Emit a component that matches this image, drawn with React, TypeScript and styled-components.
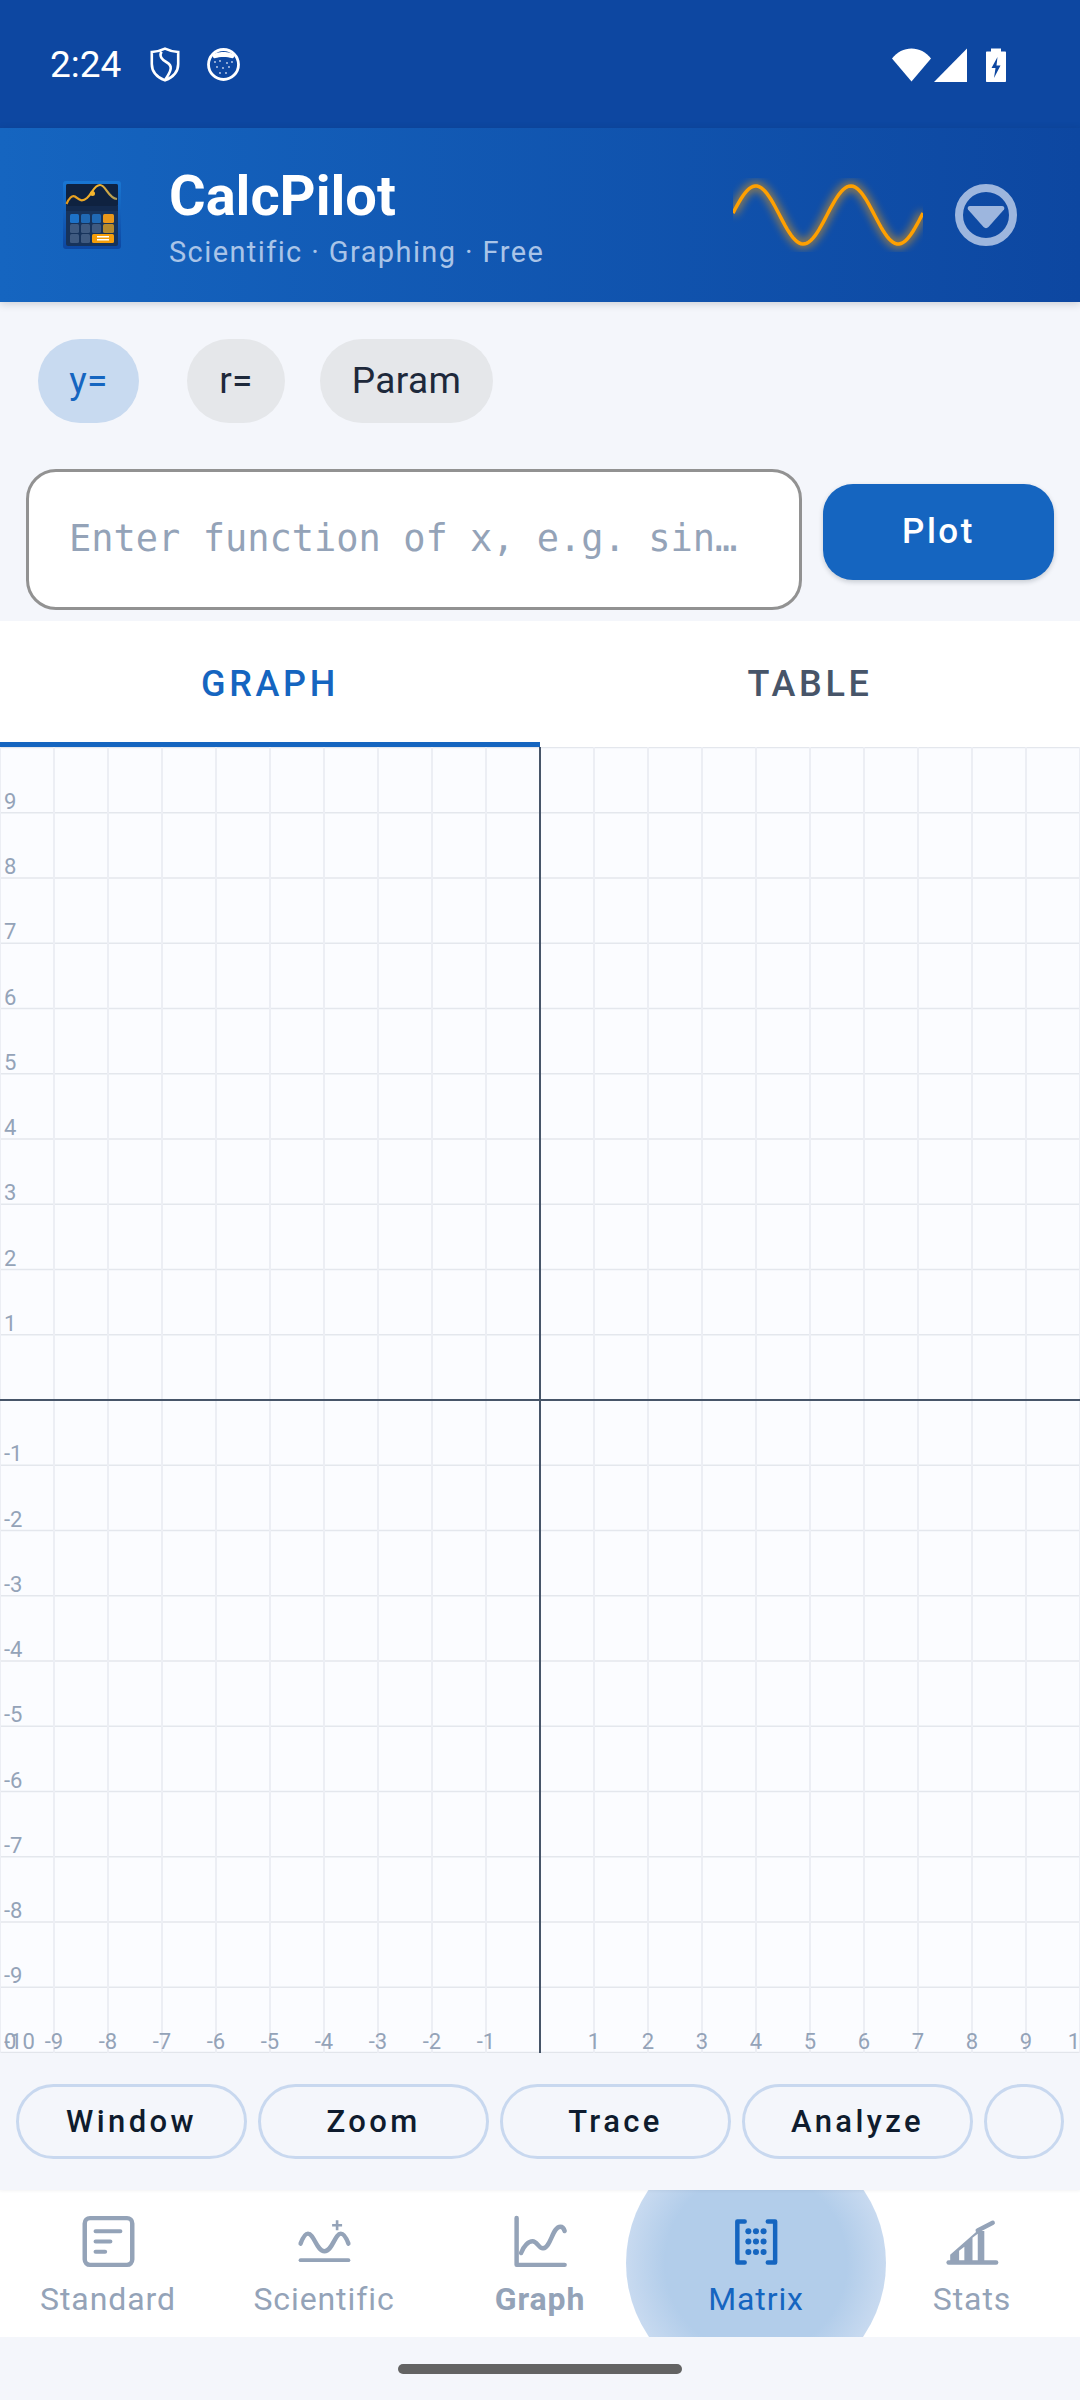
import React from "react";
import styled, { createGlobalStyle } from "styled-components";

const GlobalStyle = createGlobalStyle`
  html, body {
    margin: 0;
    padding: 0;
    background: #f4f6fb;
  }
  * {
    box-sizing: border-box;
  }
`;

const modes = [
  { label: "y=", width: 101, active: true },
  { label: "r=", width: 98, active: false },
  { label: "Param", width: 173, active: false },
];

const tools = ["Window", "Zoom", "Trace", "Analyze"];

const GRID_W = 1080;
const GRID_H = 1306;
const CELL_X = 54;
const CELL_Y = 65.25;

const range = (from: number, to: number) => {
  const out: number[] = [];
  for (let i = from; i <= to; i++) out.push(i);
  return out;
};

const sinePath = () => {
  const pts: string[] = [];
  for (let x = 0; x <= 190; x += 2) {
    const y = 37 - 29 * Math.sin(((x + 1) / 95) * Math.PI * 2);
    pts.push(`${x === 0 ? "M" : "L"}${x} ${y.toFixed(2)}`);
  }
  return pts.join(" ");
};

const ShieldIcon = () => (
  <svg width="30" height="35" viewBox="0 0 30 35" fill="none" stroke="#fff" strokeWidth="2.6">
    <path d="M15 1.6C11 3.6 6.5 4.6 1.8 5V17C1.8 25 7.5 30.5 15 33.4C22.5 30.5 28.2 25 28.2 17V5C23.5 4.6 19 3.6 15 1.6Z" />
    <path d="M11.5 4.5C9 9 11.5 12.5 17 15.5C22.5 18.5 22 23 15 33" />
  </svg>
);

const BubbleIcon = () => (
  <svg width="33" height="33" viewBox="0 0 33 33">
    <circle cx="16.5" cy="16.5" r="15" fill="none" stroke="#fff" strokeWidth="2.8" />
    <path d="M6 7C9 3 24 3 27 7C27.5 9.5 26 11 24.5 10C21 8.5 12 8.5 8.5 10C7 11 5.5 9.5 6 7Z" fill="#fff" />
    {[
      [8, 14],
      [13, 13],
      [20, 15],
      [25, 14],
      [10, 19],
      [16, 20],
      [22, 19],
      [13, 25],
      [19, 25],
    ].map(([cx, cy]) => (
      <circle key={`${cx}-${cy}`} cx={cx} cy={cy} r="0.9" fill="#c8d6ee" />
    ))}
  </svg>
);

const WifiIcon = () => (
  <svg width="39" height="34" viewBox="0 0 39 34">
    <path d="M0 10.5C5 4 12 0.5 19.5 0.5C27 0.5 34 4 39 10.5L19.5 33.5Z" fill="#fff" />
  </svg>
);

const SignalIcon = () => (
  <svg width="33" height="34" viewBox="0 0 33 34">
    <path d="M33 0.5V34H0Z" fill="#fff" />
  </svg>
);

const BatteryIcon = () => (
  <svg width="20" height="34" viewBox="0 0 20 34">
    <path
      d="M5 0.5H15V3.5H19C19.6 3.5 20 3.9 20 4.5V33C20 33.6 19.6 34 19 34H1C0.4 34 0 33.6 0 33V4.5C0 3.9 0.4 3.5 1 3.5H5Z"
      fill="#fff"
    />
    <path d="M11.5 9L5.5 20H9.5L8 30L14.5 17.5H10.5Z" fill="#0d47a1" />
  </svg>
);

const LogoIcon = () => (
  <svg width="58" height="68" viewBox="0 0 58 68">
    <defs>
      <linearGradient id="logoEdge" x1="0" y1="0" x2="0" y2="1">
        <stop offset="0" stopColor="#1976d2" />
        <stop offset="1" stopColor="#0d47a1" />
      </linearGradient>
      <linearGradient id="logoCurve" x1="0" y1="0" x2="1" y2="0">
        <stop offset="0" stopColor="#e39a1c" />
        <stop offset="0.6" stopColor="#f5b52e" />
        <stop offset="1" stopColor="#a99a5c" />
      </linearGradient>
    </defs>
    <rect width="58" height="68" rx="3" fill="url(#logoEdge)" />
    <rect x="3" y="3" width="52" height="62" rx="2" fill="#17335b" />
    <rect x="3" y="3" width="52" height="22" rx="2" fill="#0f2240" />
    <rect x="3" y="25" width="52" height="5" fill="#132a4e" />
    <path d="M3.5 23C6 17 9 14 12 15.5C15 17.5 18 22 24 17C29 13 31 4 37 4C43 4 45 17 54 18" fill="none" stroke="url(#logoCurve)" strokeWidth="2.2" />
    <circle cx="29.5" cy="12.5" r="2.5" fill="#f5b52e" />
    <rect x="7" y="33" width="9" height="9" rx="1.5" fill="#1d72c8" />
    <rect x="18" y="33" width="9" height="9" rx="1.5" fill="#2069b4" />
    <rect x="29" y="33" width="9" height="9" rx="1.5" fill="#2069b4" />
    <rect x="40" y="33" width="11" height="9" rx="1.5" fill="#e8971a" />
    <rect x="7" y="43" width="9" height="9" rx="1.5" fill="#3f5a80" />
    <rect x="18" y="43" width="9" height="9" rx="1.5" fill="#3f5a80" />
    <rect x="29" y="43" width="9" height="9" rx="1.5" fill="#3f5a80" />
    <rect x="40" y="43" width="11" height="9" rx="1.5" fill="#b58a2f" />
    <rect x="7" y="53" width="9" height="9" rx="1.5" fill="#3f5a80" />
    <rect x="18" y="53" width="9" height="9" rx="1.5" fill="#3f5a80" />
    <rect x="29" y="53" width="22" height="9" rx="1.5" fill="#f59e0b" />
    <rect x="34" y="55" width="12" height="1.5" fill="#fff" />
    <rect x="34" y="58" width="12" height="1.5" fill="#fff" />
  </svg>
);

const WaveIcon = () => (
  <svg width="190" height="74" viewBox="0 0 190 74">
    <defs>
      <filter id="waveGlow" x="-10%" y="-30%" width="120%" height="160%">
        <feGaussianBlur stdDeviation="4" />
      </filter>
    </defs>
    <path d={sinePath()} fill="none" stroke="#ffa000" strokeWidth="8" opacity="0.6" filter="url(#waveGlow)" />
    <path d={sinePath()} fill="none" stroke="#ffa000" strokeWidth="3.5" />
  </svg>
);

const DropdownIcon = () => (
  <svg width="62" height="62" viewBox="0 0 62 62">
    <circle cx="31" cy="31" r="27" fill="none" stroke="#9db6de" strokeWidth="8" />
    <path d="M15 22H47C49 22 50 24 49 25.5L33.5 43C32 44.5 30 44.5 28.5 43L13 25.5C12 24 13 22 15 22Z" fill="#9db6de" />
  </svg>
);

const GraphGrid = () => (
  <svg width={GRID_W} height={GRID_H} viewBox={`0 0 ${GRID_W} ${GRID_H}`}>
    {range(0, 20).map((i) => (
      <line key={`h${i}`} x1="0" x2={GRID_W} y1={i * CELL_Y + 0.5} y2={i * CELL_Y + 0.5} stroke="#e4e7ed" strokeWidth="1.5" />
    ))}
    {range(0, 20).map((i) => (
      <line key={`v${i}`} x1={i * CELL_X} x2={i * CELL_X} y1="0" y2={GRID_H} stroke="#eceef4" strokeWidth="2" />
    ))}
    <line x1="0" x2={GRID_W} y1="653" y2="653" stroke="#475569" strokeWidth="2" />
    <line x1="540" x2="540" y1="0" y2={GRID_H} stroke="#475569" strokeWidth="2" />
    <g fontFamily="Roboto, sans-serif" fontSize="22" fill="#94a3b8">
      {range(-9, 9)
        .filter((n) => n !== 0)
        .map((n) => (
          <text key={`y${n}`} x="4" y={653 - n * CELL_Y - 4}>
            {n}
          </text>
        ))}
      <text x="4" y="1302">0</text>
      <text x="4" y="1302">-10</text>
      {range(-9, 10)
        .filter((n) => n !== 0)
        .map((n) => (
          <text key={`x${n}`} x={540 + n * CELL_X} y="1302" textAnchor="middle">
            {n}
          </text>
        ))}
    </g>
  </svg>
);

const StandardIcon = () => (
  <NavSvg>
    <rect x="2.95" y="3.1" width="18.1" height="17.8" rx="2" fill="none" stroke="currentColor" strokeWidth="1.7" />
    <path d="M7.1 8.1H16.5M7.1 12H12.7M7.1 15.9H10.7" fill="none" stroke="currentColor" strokeWidth="1.6" strokeLinecap="round" />
  </NavSvg>
);

const ScientificIcon = () => (
  <NavSvg>
    <path d="M2.9 12.8C3.7 10.6 4.6 9 5.7 9C8 9 9 15.7 12 15.7C15 15.7 16 9 18.2 9C19.4 9 20.3 10.6 21.1 12.8" fill="none" stroke="currentColor" strokeWidth="1.7" strokeLinecap="round" />
    <path d="M2.9 19.1H21.1" fill="none" stroke="currentColor" strokeWidth="1.5" strokeLinecap="round" />
    <path d="M16.8 3.9V7.7M14.9 5.8H18.7" fill="none" stroke="currentColor" strokeWidth="1" />
  </NavSvg>
);

const GraphIcon = () => (
  <NavSvg>
    <path d="M2.9 3V20.9H21.2" fill="none" stroke="currentColor" strokeWidth="1.7" strokeLinecap="round" strokeLinejoin="round" />
    <path d="M4.6 16.4C5.6 13.5 7.5 11.9 9 11.9C10.8 11.9 11.3 14.8 13 14.6C16 14.2 16.5 6.4 19.6 6.4C20.4 6.4 20.9 7 21.2 8" fill="none" stroke="currentColor" strokeWidth="1.7" strokeLinecap="round" />
  </NavSvg>
);

const MatrixIcon = () => (
  <NavSvg>
    <path d="M7.5 4.4H4.7V20H7.5M16.3 4.4H19.1V20H16.3" fill="none" stroke="currentColor" strokeWidth="1.7" strokeLinejoin="round" strokeLinecap="round" />
    {[8.1, 12, 16].map((cy) =>
      [8.9, 11.8, 14.7].map((cx) => <circle key={`${cx}-${cy}`} cx={cx} cy={cy} r="1.15" fill="currentColor" />),
    )}
  </NavSvg>
);

const StatsIcon = () => (
  <NavSvg>
    <path
      fillRule="evenodd"
      d="M3.5 17L13.8 8H16.5V19.5H3.5ZM6.9 15.5V19.5H8.9V14ZM12 10.6V19.5H14V9Z"
      fill="currentColor"
    />
    <path d="M14 7.8L19.7 4.9" fill="none" stroke="currentColor" strokeWidth="1.7" strokeLinecap="round" />
    <path d="M2.9 20H21" fill="none" stroke="currentColor" strokeWidth="1.7" strokeLinecap="round" />
  </NavSvg>
);

const navItems = [
  { label: "Standard", Icon: StandardIcon },
  { label: "Scientific", Icon: ScientificIcon },
  { label: "Graph", Icon: GraphIcon, bold: true },
  { label: "Matrix", Icon: MatrixIcon, active: true },
  { label: "Stats", Icon: StatsIcon },
];

export default function App() {
  return (
    <Page>
      <GlobalStyle />
      <StatusBar>
        <Time>2:24</Time>
        <ShieldIcon />
        <BubbleIcon />
        <StatusRight>
          <WifiIcon />
          <SignalIcon />
          <BatteryIcon />
        </StatusRight>
      </StatusBar>

      <Header>
        <LogoIcon />
        <TitleBlock>
          <Title>CalcPilot</Title>
          <Subtitle>Scientific · Graphing · Free</Subtitle>
        </TitleBlock>
        <HeaderRight>
          <WaveIcon />
          <DropdownIcon />
        </HeaderRight>
      </Header>

      <Controls>
        <ModeRow>
          {modes.map((m) => (
            <ModeChip key={m.label} $width={m.width} $active={m.active}>
              {m.label}
            </ModeChip>
          ))}
        </ModeRow>
        <InputRow>
          <FunctionInput placeholder="Enter function of x, e.g. sin…" readOnly />
          <PlotButton>Plot</PlotButton>
        </InputRow>
      </Controls>

      <Tabs>
        <Tab $active>GRAPH</Tab>
        <Tab>TABLE</Tab>
      </Tabs>

      <GraphArea>
        <GraphGrid />
      </GraphArea>

      <Toolbar>
        {tools.map((t) => (
          <ToolButton key={t}>{t}</ToolButton>
        ))}
        <ToolStub />
      </Toolbar>

      <Nav>
        {navItems.map(({ label, Icon, active, bold }) => (
          <NavItem key={label} $active={active}>
            {active && <NavHighlight />}
            <Icon />
            <NavLabel $bold={bold}>{label}</NavLabel>
          </NavItem>
        ))}
      </Nav>

      <GestureArea>
        <GesturePill />
      </GestureArea>
    </Page>
  );
}

const NavSvg = ({ children }: { children: React.ReactNode }) => (
  <NavIconSvg viewBox="0 0 24 24">{children}</NavIconSvg>
);

const Page = styled.div`
  width: 1080px;
  height: 2400px;
  display: flex;
  flex-direction: column;
  overflow: hidden;
  font-family: Roboto, sans-serif;
  background: #f4f6fb;
`;

const StatusBar = styled.div`
  height: 128px;
  flex: none;
  display: flex;
  align-items: center;
  gap: 27px;
  padding: 1px 74px 0 50px;
  background: #0d47a1;
`;

const Time = styled.div`
  color: #fff;
  font-size: 37px;
  margin-right: 2px;
`;

const StatusRight = styled.div`
  margin-left: auto;
  display: flex;
  align-items: center;
  gap: 3px;

  svg:last-child {
    margin-left: 16px;
  }
`;

const Header = styled.div`
  height: 174px;
  flex: none;
  display: flex;
  align-items: center;
  padding: 0 63px;
  background: linear-gradient(90deg, #1565c0, #0d47a1);
  box-shadow: 0 2px 8px rgba(15, 28, 46, 0.18);
  position: relative;
  z-index: 1;
`;

const TitleBlock = styled.div`
  margin-left: 48px;
  padding-top: 2px;
  display: flex;
  flex-direction: column;
`;

const Title = styled.div`
  color: #fff;
  font-size: 56px;
  font-weight: 700;
  line-height: 64px;
`;

const Subtitle = styled.div`
  color: #a9c4e8;
  font-size: 29px;
  letter-spacing: 1.4px;
  line-height: 34px;
  margin-top: 7px;
`;

const HeaderRight = styled.div`
  margin-left: auto;
  display: flex;
  align-items: center;
  gap: 32px;
`;

const Controls = styled.div`
  height: 319px;
  flex: none;
  padding-top: 37px;
`;

const ModeRow = styled.div`
  display: flex;
  gap: 35px;
  padding-left: 38px;

  > :first-child {
    margin-right: 13px;
  }
`;

const ModeChip = styled.div<{ $width: number; $active?: boolean }>`
  width: ${(p) => p.$width}px;
  height: 84px;
  padding-bottom: 2px;
  border-radius: 42px;
  display: flex;
  align-items: center;
  justify-content: center;
  font-size: 37px;
  letter-spacing: 0.4px;
  color: ${(p) => (p.$active ? "#1565c0" : "#1e293b")};
  background: ${(p) => (p.$active ? "#c8daf0" : "#e5e7ea")};
`;

const InputRow = styled.div`
  margin-top: 46px;
  padding-left: 26px;
  display: flex;
  align-items: center;
  gap: 21px;
`;

const FunctionInput = styled.input`
  width: 776px;
  height: 141px;
  padding: 0 40px 2px;
  border: 3px solid #929292;
  border-radius: 30px;
  background: #fff;
  outline: none;
  font-family: "DejaVu Sans Mono", monospace;
  font-size: 37px;

  &::placeholder {
    color: #94a3b8;
    opacity: 1;
  }
`;

const PlotButton = styled.button`
  width: 231px;
  height: 96px;
  margin-top: -16px;
  border: none;
  border-radius: 30px;
  background: #1565c0;
  color: #fff;
  font-family: Roboto, sans-serif;
  font-size: 35px;
  font-weight: 500;
  letter-spacing: 2.5px;
  box-shadow: 0 2px 5px rgba(15, 28, 46, 0.2);
`;

const Tabs = styled.div`
  height: 126px;
  flex: none;
  display: flex;
  background: #fff;
`;

const Tab = styled.div<{ $active?: boolean }>`
  flex: 1;
  display: flex;
  align-items: center;
  justify-content: center;
  padding-top: 5px;
  font-size: 36px;
  font-weight: 500;
  letter-spacing: 3.7px;
  color: ${(p) => (p.$active ? "#1565c0" : "#475569")};
  border-bottom: 5px solid ${(p) => (p.$active ? "#1565c0" : "transparent")};
`;

const GraphArea = styled.div`
  height: 1306px;
  flex: none;
  background: #fbfcff;
  overflow: hidden;

  svg {
    display: block;
  }
`;

const Toolbar = styled.div`
  height: 137px;
  flex: none;
  display: flex;
  align-items: center;
  gap: 11px;
  padding-left: 16px;
  background: #f4f6fb;
  position: relative;
  z-index: 1;
  box-shadow: 0 1px 3px rgba(15, 28, 46, 0.05);
`;

const ToolButton = styled.div`
  width: 231px;
  height: 75px;
  border: 3px solid #c8d8ef;
  border-radius: 38px;
  display: flex;
  align-items: center;
  justify-content: center;
  color: #0f1c2e;
  font-size: 31px;
  font-weight: 500;
  letter-spacing: 3.4px;
`;

const ToolStub = styled(ToolButton)`
  width: 80px;
`;

const Nav = styled.div`
  height: 147px;
  flex: none;
  display: flex;
  position: relative;
  overflow: hidden;
  background: #fff;
`;

const NavItem = styled.div<{ $active?: boolean }>`
  width: 216px;
  display: flex;
  flex-direction: column;
  align-items: center;
  padding-top: 20px;
  position: relative;
  color: ${(p) => (p.$active ? "#1565c0" : "#94a3b8")};
`;

const NavHighlight = styled.div`
  position: absolute;
  left: -22px;
  top: -57px;
  width: 260px;
  height: 260px;
  border-radius: 50%;
  background: radial-gradient(circle closest-side, #b2cdea 0%, #b2cdea 70%, #c8daf0 100%);
`;

const NavIconSvg = styled.svg`
  width: 63px;
  height: 63px;
  position: relative;
`;

const NavLabel = styled.div<{ $bold?: boolean }>`
  position: relative;
  font-size: 32px;
  font-weight: ${(p) => (p.$bold ? 700 : 400)};
  letter-spacing: 0.9px;
  line-height: 34px;
  margin-top: 9px;
`;

const GestureArea = styled.div`
  flex: 1;
  display: flex;
  justify-content: center;
  padding-top: 27px;
`;

const GesturePill = styled.div`
  width: 284px;
  height: 10px;
  border-radius: 5px;
  background: #636363;
`;
